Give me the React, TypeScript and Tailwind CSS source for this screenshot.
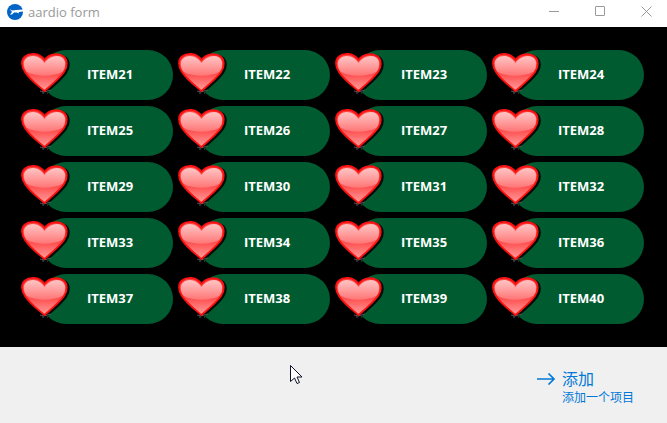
import React, { useId, useState } from 'react';

const FIRST_ITEM = 21;
const ITEM_COUNT = 20;

const HeartIcon: React.FC<{ className?: string }> = ({ className }) => {
  const id = useId();
  const shape =
    'M23.500 39C19 35 9 28 4 20C0 14 0 8 4 4.500C8 1 18 0 23.500 8C29 0.500 38 1.500 42.500 4.500C47 8 46.500 15 43 20C38 27 28 35 23.500 39Z';

  return (
    <svg className={className} viewBox="0 0 52 44" fill="none" aria-hidden="true">
      <defs>
        <linearGradient id={`${id}-body`} x1="24" y1="3" x2="24" y2="39" gradientUnits="userSpaceOnUse">
          <stop offset="0" stopColor="#ff4040" />
          <stop offset="0.55" stopColor="#ff5050" />
          <stop offset="0.75" stopColor="#ff7474" />
          <stop offset="1" stopColor="#ff9c9c" />
        </linearGradient>
        <linearGradient id={`${id}-gloss`} x1="24" y1="4" x2="24" y2="25" gradientUnits="userSpaceOnUse">
          <stop offset="0" stopColor="#ffc4c4" />
          <stop offset="0.4" stopColor="#ffa4a4" />
          <stop offset="1" stopColor="#ff7070" />
        </linearGradient>
      </defs>
      <path d={shape} transform="translate(2 1)" fill="#020b06" stroke="#020b06" strokeWidth="2" />
      <path d="M19 39l4 1 7-2M21 41h2M26 41h1" stroke="#55555a" strokeWidth="1" />
      <path d={shape} fill={`url(#${id}-body)`} />
      <path
        d="M3 13C2 8 6 4 12 4C17 4 21 7 23.500 11C26 7 31 4 36 4C42 4 45 9 44 13C44 16 43 18 41 20C31 25 16 25 6 20C4 18 3 16 3 13Z"
        fill={`url(#${id}-gloss)`}
      />
      <path d={shape} stroke="#fa1010" strokeWidth="1.800" strokeLinejoin="round" />
    </svg>
  );
};

const AppLogo = () => (
  <svg className="h-4 w-4" viewBox="0 0 16 16" aria-hidden="true">
    <circle cx="8" cy="8" r="8" fill="#0063c6" />
    <path d="M2.500 5L5 6.500L9 6L16 5.500V7.500L12 8L11.500 9.500L10 8.500L7 8.500L5 10.500L3 10.500L5 8Z" fill="#fff" />
  </svg>
);

const TitleBar = () => (
  <header className="flex h-[27px] items-center justify-between bg-white pr-[15px] pl-[7px] text-[#999999]">
    <div className="flex items-center gap-[5px] pb-1">
      <AppLogo />
      <h1 className="text-[13px] leading-4">aardio form</h1>
    </div>
    <div className="flex items-center gap-[35px] pb-1">
      <button type="button" aria-label="Minimize">
        <svg className="h-[11px] w-[11px]" viewBox="0 0 11 11" stroke="currentColor" fill="none">
          <path d="M0 5.500h10" />
        </svg>
      </button>
      <button type="button" aria-label="Maximize">
        <svg className="h-[11px] w-[11px]" viewBox="0 0 11 11" stroke="currentColor" fill="none">
          <rect x="0.500" y="0.500" width="9" height="9" rx="0.500" />
        </svg>
      </button>
      <button type="button" aria-label="Close">
        <svg className="h-[11px] w-[11px]" viewBox="0 0 11 11" stroke="currentColor" fill="none">
          <path d="M0.500 0.500l10 10M10.500 0.500l-10 10" />
        </svg>
      </button>
    </div>
  </header>
);

const ItemButton: React.FC<{ label: string }> = ({ label }) => (
  <button type="button" className="relative flex h-[50px] pl-5 text-left">
    <span className="flex h-full flex-1 items-center rounded-full bg-[#005c30] pb-[2px] pl-[46px] text-[13px] leading-4 font-bold text-white">
      {label}
    </span>
    <HeartIcon className="absolute top-[2px] left-0 h-11 w-[52px]" />
  </button>
);

const Pointer = () => (
  <svg className="absolute top-[18px] left-[290px] h-5 w-[13px]" viewBox="0 0 13 20" aria-hidden="true">
    <path
      d="M0.500 0.500V16.500L4.500 13L7 18.500L9.500 17.500L7 12H12Z"
      fill="#fff"
      stroke="#11112b"
      strokeLinejoin="round"
    />
  </svg>
);

export default function App() {
  const [count, setCount] = useState(ITEM_COUNT);
  const items = Array.from({ length: count }, (_, i) => `ITEM${FIRST_ITEM + i}`);

  return (
    <div className="flex min-h-screen flex-col bg-[#f0f0f0] font-['Open_Sans','Noto_Sans_CJK_SC',sans-serif]">
      <TitleBar />
      <main className="grid grid-cols-4 gap-x-[5px] gap-y-[6px] bg-black py-[23px] pr-[23px] pl-[21px]">
        {items.map((item) => (
          <ItemButton key={item} label={item} />
        ))}
      </main>

      <footer className="relative flex flex-1 items-start justify-end pt-5 pr-[33px]">
        <Pointer />
        <button
          type="button"
          onClick={() => setCount(count + 1)}
          className="flex gap-[6px] text-left font-['Noto_Sans_CJK_SC',sans-serif] text-[#0078d7]"
        >
          <svg className="mt-[6px] h-3 w-5" viewBox="0 0 20 12" fill="none" stroke="currentColor" strokeWidth="1.600">
            <path d="M1 6h17M12.500 0.500L18 6L12.500 11.500" />
          </svg>
          <span className="flex flex-col">
            <span className="text-base leading-[22px]">添加</span>
            <span className="text-xs leading-4">添加一个项目</span>
          </span>
        </button>
      </footer>
    </div>
  );
}
